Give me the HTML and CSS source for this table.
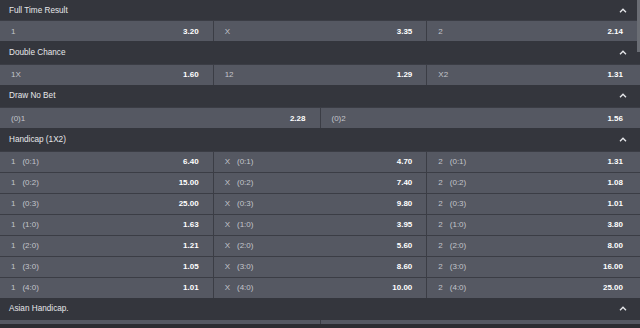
FILE: index.html
```html
<!DOCTYPE html>
<html>
<head>
<meta charset="utf-8">
<link rel="stylesheet" href="styles.css">
</head>
<body>
<div class="page">
  <section class="market">
    <div class="market-head first"><span>Full Time Result</span><svg class="chev" viewBox="0 0 8 5"><path d="M1 4.2 L4 1.2 L7 4.2"/></svg></div>
    <div class="market-body cols-3">
      <div class="cell"><span class="lbl">1</span><span class="odd">3.20</span></div>
      <div class="cell"><span class="lbl">X</span><span class="odd">3.35</span></div>
      <div class="cell last"><span class="lbl">2</span><span class="odd">2.14</span></div>
    </div>
  </section>
  <section class="market">
    <div class="market-head"><span>Double Chance</span><svg class="chev" viewBox="0 0 8 5"><path d="M1 4.2 L4 1.2 L7 4.2"/></svg></div>
    <div class="market-body cols-3">
      <div class="cell"><span class="lbl">1X</span><span class="odd">1.60</span></div>
      <div class="cell"><span class="lbl">12</span><span class="odd">1.29</span></div>
      <div class="cell last"><span class="lbl">X2</span><span class="odd">1.31</span></div>
    </div>
  </section>
  <section class="market">
    <div class="market-head"><span>Draw No Bet</span><svg class="chev" viewBox="0 0 8 5"><path d="M1 4.2 L4 1.2 L7 4.2"/></svg></div>
    <div class="market-body cols-2">
      <div class="cell"><span class="lbl">(0)1</span><span class="odd">2.28</span></div>
      <div class="cell last"><span class="lbl">(0)2</span><span class="odd">1.56</span></div>
    </div>
  </section>
  <section class="market">
    <div class="market-head"><span>Handicap (1X2)</span><svg class="chev" viewBox="0 0 8 5"><path d="M1 4.2 L4 1.2 L7 4.2"/></svg></div>
    <div class="market-body cols-3">
      <div class="cell"><span class="lbl">1<span class="hc">(0:1)</span></span><span class="odd">6.40</span></div>
      <div class="cell"><span class="lbl">X<span class="hc">(0:1)</span></span><span class="odd">4.70</span></div>
      <div class="cell last"><span class="lbl">2<span class="hc">(0:1)</span></span><span class="odd">1.31</span></div>
      <div class="cell"><span class="lbl">1<span class="hc">(0:2)</span></span><span class="odd">15.00</span></div>
      <div class="cell"><span class="lbl">X<span class="hc">(0:2)</span></span><span class="odd">7.40</span></div>
      <div class="cell last"><span class="lbl">2<span class="hc">(0:2)</span></span><span class="odd">1.08</span></div>
      <div class="cell"><span class="lbl">1<span class="hc">(0:3)</span></span><span class="odd">25.00</span></div>
      <div class="cell"><span class="lbl">X<span class="hc">(0:3)</span></span><span class="odd">9.80</span></div>
      <div class="cell last"><span class="lbl">2<span class="hc">(0:3)</span></span><span class="odd">1.01</span></div>
      <div class="cell"><span class="lbl">1<span class="hc">(1:0)</span></span><span class="odd">1.63</span></div>
      <div class="cell"><span class="lbl">X<span class="hc">(1:0)</span></span><span class="odd">3.95</span></div>
      <div class="cell last"><span class="lbl">2<span class="hc">(1:0)</span></span><span class="odd">3.80</span></div>
      <div class="cell"><span class="lbl">1<span class="hc">(2:0)</span></span><span class="odd">1.21</span></div>
      <div class="cell"><span class="lbl">X<span class="hc">(2:0)</span></span><span class="odd">5.60</span></div>
      <div class="cell last"><span class="lbl">2<span class="hc">(2:0)</span></span><span class="odd">8.00</span></div>
      <div class="cell"><span class="lbl">1<span class="hc">(3:0)</span></span><span class="odd">1.05</span></div>
      <div class="cell"><span class="lbl">X<span class="hc">(3:0)</span></span><span class="odd">8.60</span></div>
      <div class="cell last"><span class="lbl">2<span class="hc">(3:0)</span></span><span class="odd">16.00</span></div>
      <div class="cell"><span class="lbl">1<span class="hc">(4:0)</span></span><span class="odd">1.01</span></div>
      <div class="cell"><span class="lbl">X<span class="hc">(4:0)</span></span><span class="odd">10.00</span></div>
      <div class="cell last"><span class="lbl">2<span class="hc">(4:0)</span></span><span class="odd">25.00</span></div>
    </div>
  </section>
  <section class="market">
    <div class="market-head"><span>Asian Handicap.</span><svg class="chev" viewBox="0 0 8 5"><path d="M1 4.2 L4 1.2 L7 4.2"/></svg></div>
    <div class="market-body cols-2 cut">
      <div class="cell"></div>
      <div class="cell last"></div>
    </div>
  </section>
</div>
<div class="scroll-thumb"></div>
</body>
</html>
```

FILE: styles.css
```css
html, body {
  margin: 0;
  padding: 0;
  background: #2b2c31;
  height: 328px;
  overflow: hidden;
}
body {
  font-family: "Liberation Sans", Arial, sans-serif;
  font-size: 8px;
  color: #e4e5e8;
  position: relative;
}
.page {
  width: 640px;
}
.market-head {
  height: 22.5px;
  background: #34363d;
  display: flex;
  align-items: center;
  justify-content: space-between;
  padding: 0 13px 0 9px;
  box-sizing: border-box;
  font-size: 8.2px;
  color: #e6e7ea;
}
.market-head.first {
  height: 20px;
}
.chev {
  width: 8px;
  height: 5px;
  fill: none;
  stroke: #e8e9ec;
  stroke-width: 1.3;
}
.market-body {
  display: grid;
  gap: 1px;
  background: #3b3d45;
  border-top: 1px solid #3b3d45;
}
.cols-3 { grid-template-columns: 1fr 1fr 1fr; }
.cols-2 { grid-template-columns: 1fr 1fr; }
.cell {
  height: 20px;
  background: #555862;
  display: flex;
  align-items: center;
  justify-content: space-between;
  padding: 0 14px 0 11px;
}
.cell.last {
  padding-right: 17px;
}
.lbl {
  color: #c3c5cb;
}
.hc {
  margin-left: 7px;
}
.odd {
  color: #ffffff;
  font-weight: bold;
}
.cut {
  border-top: 0;
  border-bottom: 0;
}
.cut .cell {
  height: 4px;
}
.scroll-thumb {
  position: absolute;
  top: 0;
  right: 0;
  width: 3px;
  height: 52px;
  background: #6a6d74;
}
```
